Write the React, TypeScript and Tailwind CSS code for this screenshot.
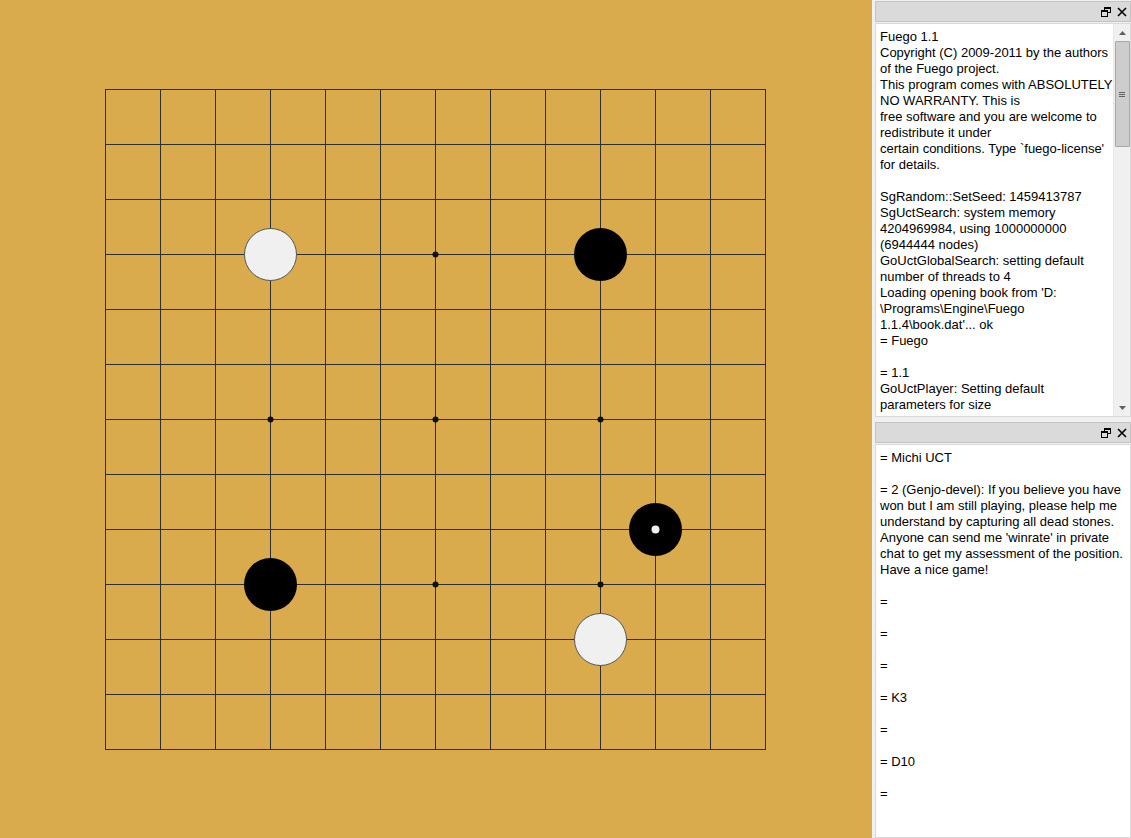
import React from "react";

const CELL = 55;
const N = 13;

const stars = [
  [6, 3],
  [3, 6],
  [6, 6],
  [9, 6],
  [6, 9],
  [9, 9],
];

const stones: { x: number; y: number; c: "b" | "w"; last?: boolean }[] = [
  { x: 3, y: 3, c: "w" },
  { x: 9, y: 3, c: "b" },
  { x: 3, y: 9, c: "b" },
  { x: 9, y: 10, c: "w" },
  { x: 10, y: 8, c: "b", last: true },
];

const fuegoLines = [
  "Fuego 1.1",
  "Copyright (C) 2009-2011 by the authors",
  "of the Fuego project.",
  "This program comes with ABSOLUTELY",
  "NO WARRANTY. This is",
  "free software and you are welcome to",
  "redistribute it under",
  "certain conditions. Type `fuego-license'",
  "for details.",
  "",
  "SgRandom::SetSeed: 1459413787",
  "SgUctSearch: system memory",
  "4204969984, using 1000000000",
  "(6944444 nodes)",
  "GoUctGlobalSearch: setting default",
  "number of threads to 4",
  "Loading opening book from 'D:",
  "\\Programs\\Engine\\Fuego",
  "1.1.4\\book.dat'... ok",
  "= Fuego",
  "",
  "= 1.1",
  "GoUctPlayer: Setting default",
  "parameters for size",
];

const michiLines = [
  "= Michi UCT",
  "",
  "= 2 (Genjo-devel): If you believe you have",
  "won but I am still playing, please help me",
  "understand by capturing all dead stones.",
  "Anyone can send me 'winrate' in private",
  "chat to get my assessment of the position.",
  "Have a nice game!",
  "",
  "=",
  "",
  "=",
  "",
  "=",
  "",
  "= K3",
  "",
  "=",
  "",
  "= D10",
  "",
  "=",
];

function Board() {
  const size = CELL * (N - 1);
  return (
    <svg width={size + 2} height={size + 2} viewBox={`-1 -1 ${size + 2} ${size + 2}`}>
      {Array.from({ length: N }).map((_, i) => (
        <g key={i}>
          <line x1={0} y1={i * CELL + 0.5} x2={size + 1} y2={i * CELL + 0.5} stroke="#2f2f2f" strokeWidth={1} />
          <line x1={i * CELL + 0.5} y1={0} x2={i * CELL + 0.5} y2={size + 1} stroke="#2f2f2f" strokeWidth={1} />
        </g>
      ))}
      {stars.map(([x, y], i) => (
        <circle key={i} cx={x * CELL + 0.5} cy={y * CELL + 0.5} r={3} fill="#111" />
      ))}
      {stones.map((s, i) => (
        <g key={i}>
          <circle
            cx={s.x * CELL + 0.5}
            cy={s.y * CELL + 0.5}
            r={s.c === "w" ? 26 : 26.5}
            fill={s.c === "w" ? "#f0f0f0" : "#000"}
            stroke={s.c === "w" ? "#555" : "none"}
            strokeWidth={1}
          />
          {s.last && <circle cx={s.x * CELL + 0.5} cy={s.y * CELL + 0.5} r={4} fill="#f0f0f0" />}
        </g>
      ))}
    </svg>
  );
}

function TitleBar() {
  return (
    <div className="h-[21px] shrink-0 bg-[#dadada] border border-[#c4c4c4] flex items-center justify-end gap-[6px] pr-[3px]">
      <svg width="10" height="10" viewBox="0 0 10 10">
        <rect x="3.5" y="0.5" width="6" height="5" fill="none" stroke="#000" strokeWidth="1" />
        <rect x="3" y="0" width="7" height="2" fill="#000" />
        <rect x="0.5" y="3.5" width="6" height="6" fill="#dadada" stroke="#000" strokeWidth="1" />
        <rect x="0" y="3" width="7" height="2" fill="#000" />
      </svg>
      <svg width="10" height="10" viewBox="0 0 10 10">
        <path d="M1 1 L9 9 M9 1 L1 9" stroke="#000" strokeWidth="1.6" />
      </svg>
    </div>
  );
}

function Scrollbar() {
  return (
    <div className="w-[17px] shrink-0 bg-[#f0f0f0] flex flex-col items-center border-l border-[#e8e8e8]">
      <div className="h-[17px] w-full flex items-center justify-center">
        <svg width="7" height="4" viewBox="0 0 7 4">
          <path d="M0 4 L3.5 0 L7 4 Z" fill="#606060" />
        </svg>
      </div>
      <div className="h-[106px] w-[15px] bg-[#cdcdcd] border border-[#a8a8a8] rounded-[1px] flex items-center justify-center">
        <div className="flex flex-col gap-[1px]">
          <div className="w-[6px] h-px bg-[#606060]" />
          <div className="w-[6px] h-px bg-[#606060]" />
          <div className="w-[6px] h-px bg-[#606060]" />
        </div>
      </div>
      <div className="flex-1" />
      <div className="h-[17px] w-full flex items-center justify-center">
        <svg width="7" height="4" viewBox="0 0 7 4">
          <path d="M0 0 L3.5 4 L7 0 Z" fill="#606060" />
        </svg>
      </div>
    </div>
  );
}

function TextLines({ lines }: { lines: string[] }) {
  return (
    <div className="pl-[4px] pt-[5px] text-[13px] leading-[16px] text-black whitespace-pre font-['Liberation_Sans',Arial,sans-serif]">
      {lines.map((l, i) => (
        <div key={i} className="h-[16px]">
          {l || " "}
        </div>
      ))}
    </div>
  );
}

export default function App() {
  return (
    <div className="w-[1131px] h-[838px] flex overflow-hidden bg-[#f0f0f0]">
      <div className="w-[872px] h-full bg-[#d9ab4c] pl-[104px] pt-[88px] shrink-0">
        <Board />
      </div>
      <div className="w-[259px] shrink-0 min-w-0 flex flex-col pl-[3px] pt-px">
        <TitleBar />
        <div className="h-[394px] shrink-0 mt-[1px] bg-white border border-[#d9d9d9] flex overflow-hidden">
          <div className="flex-1 min-w-0 overflow-hidden">
            <TextLines lines={fuegoLines} />
          </div>
          <Scrollbar />
        </div>
        <div className="h-[5px] shrink-0" />
        <TitleBar />
        <div className="flex-1 min-h-0 mt-[1px] bg-white border border-[#d9d9d9] overflow-hidden">
          <TextLines lines={michiLines} />
        </div>
      </div>
    </div>
  );
}
